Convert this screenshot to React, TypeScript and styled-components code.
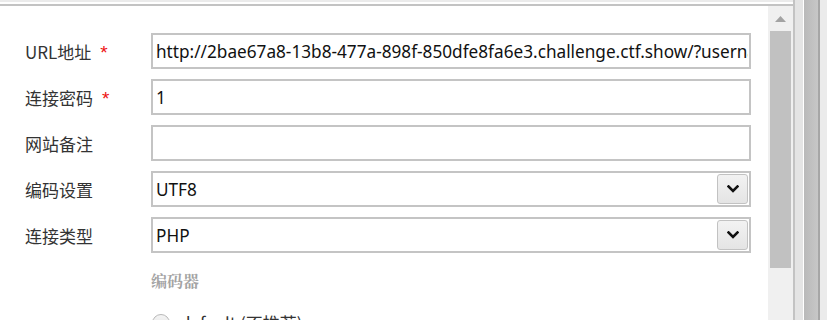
import React from "react";
import styled, { createGlobalStyle } from "styled-components";

const Global = createGlobalStyle`
  html, body { margin: 0; padding: 0; background: #ffffff; overflow: hidden; }
  #root { width: 827px; height: 320px; }
`;

const Page = styled.div`
  display: flex;
  width: 827px;
  height: 320px;
  overflow: hidden;
`;

const Panel = styled.div`
  width: 793px;
  display: flex;
  flex-direction: column;
  background: #fff;
`;

const TopEdge = styled.div`
  height: 2px;
  background: #ebebeb;
  border-bottom: 2px solid #ffffff;
  flex-shrink: 0;
`;

const TopLine = styled.div`
  height: 2px;
  background: #c3c3c3;
  flex-shrink: 0;
`;

const Body = styled.div`
  flex: 1;
  display: flex;
  min-height: 0;
`;

const Form = styled.div`
  flex: 1;
  padding: 27px 0 0 25px;
  display: flex;
  flex-direction: column;
  gap: 10px;
  overflow: hidden;
`;

const Row = styled.div`
  display: flex;
  align-items: center;
  height: 36px;
  flex-shrink: 0;
`;

const Label = styled.div`
  width: 126px;
  flex-shrink: 0;
  font-family: "Noto Sans CJK SC", "Noto Sans", sans-serif;
  font-size: 17px;
  color: #333;
  display: flex;
  align-items: center;
  gap: 9px;
`;

const Star = styled.span`
  color: #ee1111;
  font-family: "Liberation Sans", sans-serif;
  font-size: 19px;
  line-height: 1;
  margin-top: 2px;
`;

const Field = styled.div`
  width: 600px;
  height: 36px;
  box-sizing: border-box;
  border: 2px solid #c4c4c4;
  background: #fff;
  display: flex;
  align-items: center;
  padding: 0 1px 0 3px;
  overflow: hidden;
`;

const FieldText = styled.span`
  flex: 1;
  font-family: "Noto Sans", "Open Sans", sans-serif;
  font-size: 17.2px;
  color: #111;
  white-space: nowrap;
  overflow: hidden;
`;

const DropButton = styled.div`
  width: 29px;
  height: 28px;
  border: 1px solid #c2c2c2;
  border-radius: 3px;
  background: linear-gradient(#f2f2f2, #e4e4e4);
  display: flex;
  align-items: center;
  justify-content: center;
  flex-shrink: 0;
`;

const Section = styled.div`
  padding: 6px 0 0 126px;
  font-family: "Noto Serif CJK SC", "Noto Sans CJK SC", serif;
  font-weight: bold;
  font-size: 16px;
  color: #a3a3a3;
  flex-shrink: 0;
`;

const RadioRow = styled.div`
  padding: 8px 0 0 127px;
  display: flex;
  align-items: center;
  gap: 10px;
  font-family: "Noto Sans CJK SC", "Noto Sans", sans-serif;
  font-size: 17px;
  color: #333;
  flex-shrink: 0;
`;

const RadioCircle = styled.span`
  width: 16px;
  height: 16px;
  border-radius: 50%;
  border: 1px solid #b8b8b8;
  background: linear-gradient(#f4f4f4, #e2e2e2);
  flex-shrink: 0;
`;

const Scrollbar = styled.div`
  width: 25px;
  background: #f0f0f0;
  display: flex;
  flex-direction: column;
  align-items: center;
  flex-shrink: 0;
`;

const ArrowBox = styled.div`
  height: 25px;
  width: 100%;
  display: flex;
  align-items: center;
  justify-content: center;
`;

const Thumb = styled.div`
  width: 21px;
  height: 237px;
  background: #c1c1c1;
`;

const Stripe = styled.div<{ $w: number; $bg: string }>`
  width: ${(p) => p.$w}px;
  background: ${(p) => p.$bg};
  flex-shrink: 0;
`;

const Chevron = () => (
  <svg width="12" height="8" viewBox="0 0 12 8">
    <path d="M1.5 1.5 L6 6 L10.5 1.5" fill="none" stroke="#111" strokeWidth="2.6" strokeLinecap="square" />
  </svg>
);

const UpArrow = () => (
  <svg width="11" height="6" viewBox="0 0 11 6">
    <path d="M0 6 L5.5 0 L11 6 Z" fill="#a3a3a3" />
  </svg>
);

export default function App() {
  return (
    <Page>
      <Global />
      <Panel>
        <TopEdge />
        <TopLine />
        <Body>
          <Form>
            <Row>
              <Label>
                <span>URL地址</span>
                <Star>*</Star>
              </Label>
              <Field>
                <FieldText>http://2bae67a8-13b8-477a-898f-850dfe8fa6e3.challenge.ctf.show/?username=</FieldText>
              </Field>
            </Row>
            <Row>
              <Label>
                <span>连接密码</span>
                <Star>*</Star>
              </Label>
              <Field>
                <FieldText>1</FieldText>
              </Field>
            </Row>
            <Row>
              <Label>网站备注</Label>
              <Field>
                <FieldText />
              </Field>
            </Row>
            <Row>
              <Label>编码设置</Label>
              <Field>
                <FieldText>UTF8</FieldText>
                <DropButton>
                  <Chevron />
                </DropButton>
              </Field>
            </Row>
            <Row>
              <Label>连接类型</Label>
              <Field>
                <FieldText>PHP</FieldText>
                <DropButton>
                  <Chevron />
                </DropButton>
              </Field>
            </Row>
            <Section>编码器</Section>
            <RadioRow>
              <RadioCircle />
              <span>default (不推荐)</span>
            </RadioRow>
          </Form>
          <Scrollbar>
            <ArrowBox>
              <UpArrow />
            </ArrowBox>
            <Thumb />
          </Scrollbar>
        </Body>
      </Panel>
      <Stripe $w={2} $bg="#c3c3c3" />
      <Stripe $w={8} $bg="#e4e4e4" />
      <Stripe $w={1} $bg="#ffffff" />
      <Stripe $w={14} $bg="linear-gradient(90deg, #b9b9b9, #c7c7c7)" />
      <Stripe $w={2} $bg="#a6a6a6" />
      <Stripe $w={7} $bg="#ebebeb" />
    </Page>
  );
}
